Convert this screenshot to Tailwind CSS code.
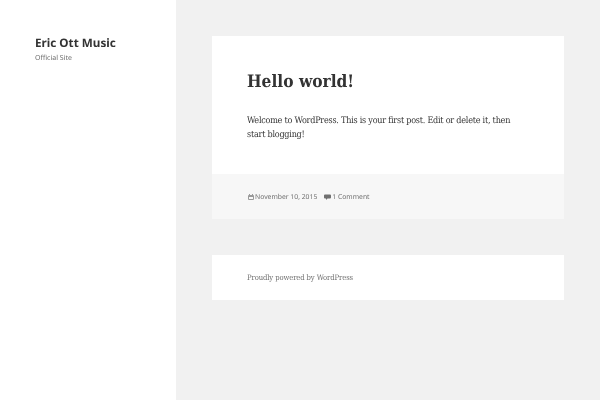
<!DOCTYPE html>
<html lang="en">
<head>
    <meta charset="UTF-8">
    <title>Eric Ott Music</title>
    <script src="https://cdn.jsdelivr.net/npm/@tailwindcss/browser@4"></script>
</head>
<body class="bg-[#f1f1f1] font-['Noto_Sans',sans-serif] [text-rendering:geometricPrecision]">
    <div class="flex h-[400px] w-[600px] overflow-hidden">
        <!-- Sidebar -->
        <aside class="w-[176px] h-full shrink-0 bg-white pl-[35px] pt-[33px]">
            <h1 class="pt-[1px] text-[11.7px] leading-[19px] font-bold text-[#333] blur-[0.25px]">Eric Ott Music</h1>
            <p class="mt-[-1px] text-[7px] leading-[14px] text-[#707070] blur-[0.25px]">Official Site</p>
        </aside>

        <!-- Main -->
        <main class="flex-1 pl-[36px] pr-[36px] pt-[36px]">
            <article class="bg-white">
                <div class="h-[138px] px-[35px] pt-[33px]">
                    <h2 class="font-['DejaVu_Serif_Condensed','DejaVu_Serif',serif] text-[17.2px] leading-[26px] font-bold text-[#333] blur-[0.25px]">Hello world!</h2>
                    <p class="mt-[20px] max-w-[270px] font-['DejaVu_Serif_Condensed','DejaVu_Serif',serif] text-[9px] leading-[13.5px] tracking-[-0.24px] text-[#333] blur-[0.25px]">Welcome to WordPress. This is your first post. Edit or delete it, then start blogging!</p>
                </div>
                <div class="flex h-[45px] items-center gap-[7px] bg-[#f7f7f7] px-[36px] pt-[2px] text-[6.8px] text-[#707070]">
                    <span class="flex items-center gap-[1px] blur-[0.25px]">
                        <svg class="mt-[-1px] w-[6px] h-[6px]" viewBox="0 0 6 6" fill="none" stroke="#9a9a9a" stroke-width="1"><path d="M.5 1.500h5v4h-5zM.5 2.500h5M1.500 0v1M4.500 0v1"/></svg>
                        November 10, 2015
                    </span>
                    <span class="flex items-center gap-[1px] blur-[0.25px]">
                        <svg class="mt-[-1px] w-[7px] h-[6px]" viewBox="0 0 7 6" fill="#707070"><path d="M1 .5h5a1 1 0 0 1 1 1v2a1 1 0 0 1-1 1H3.500L2 6V4.500H1a1 1 0 0 1-1-1v-2a1 1 0 0 1 1-1z"/></svg>
                        1 Comment
                    </span>
                </div>
            </article>

            <footer class="mt-[36px] flex h-[45px] items-center bg-white px-[35px] font-['DejaVu_Serif_Condensed','DejaVu_Serif',serif] text-[7.6px] tracking-[-0.1px] text-[#707070]">
                <span class="blur-[0.25px]">Proudly powered by WordPress</span>
            </footer>
        </main>
    </div>
</body>
</html>
